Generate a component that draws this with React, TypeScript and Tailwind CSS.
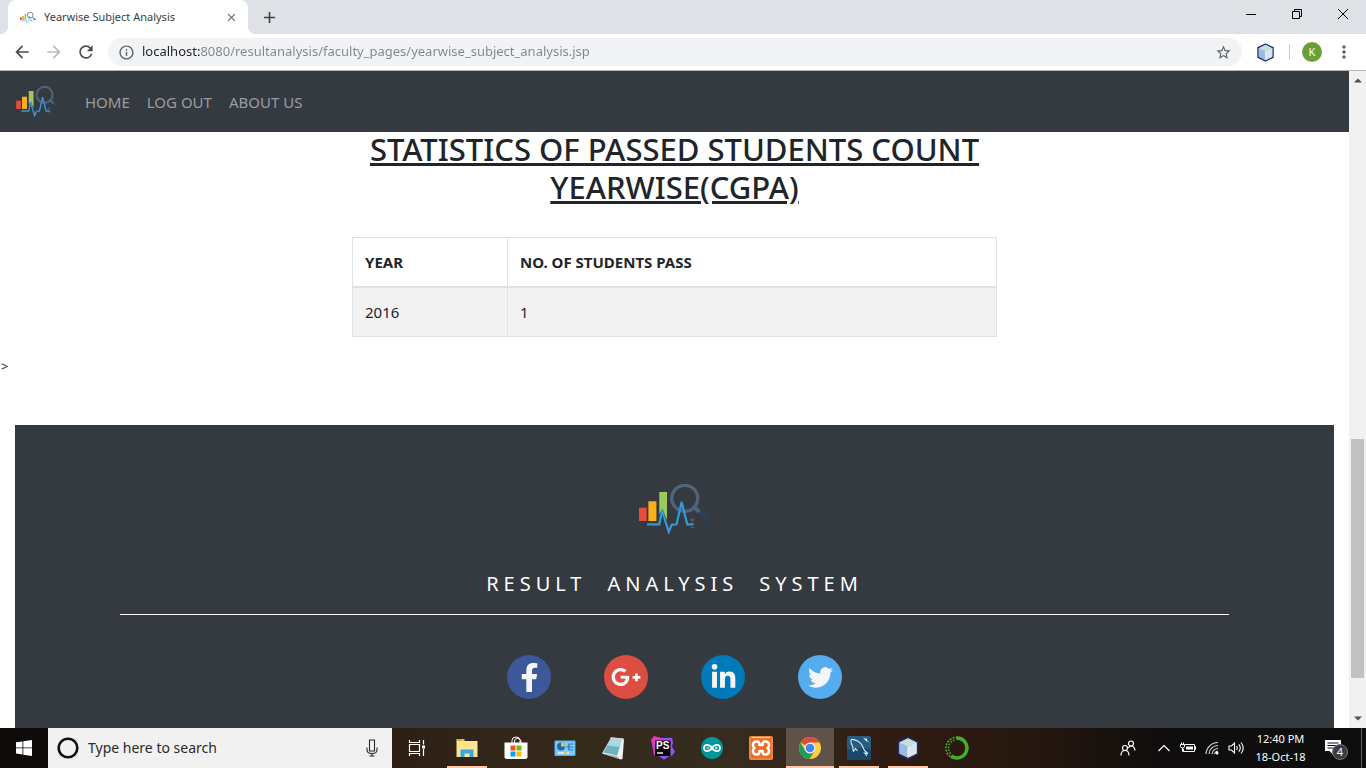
import React from "react";
import type { ReactNode } from "react";
import { FaFacebookF, FaGooglePlusG, FaLinkedinIn, FaTwitter } from "react-icons/fa";
import { MdArrowBack, MdArrowForward, MdRefresh, MdStarBorder, MdMoreVert, MdInfoOutline, MdClose, MdAdd } from "react-icons/md";

function Logo({ className }: { className: string }) {
  return (
    <svg viewBox="0 0 72 50" className={className} fill="none" aria-hidden="true">
      <rect x="0" y="23.7" width="7.6" height="13.3" fill="#e84c3d" />
      <rect x="9.4" y="17.3" width="8" height="19.7" fill="#fdb01a" />
      <path d="M20.300 8H28v28L23.500 25l-3.200 5z" fill="#9bc95c" />
      <circle cx="45.8" cy="14.3" r="13" stroke="#50647a" strokeWidth="3.400" />
      <path d="M55.500 23.500l5 4.500" stroke="#50647a" strokeWidth="3.800" />
      <path d="M60.500 28l9 8" stroke="#2b4058" strokeWidth="5" />
      <path d="M8 40.300h12.300l2.800-14 6.600 21.700 3-7.200 4.900-.5L42.600 18l5.700 22.300h6.200" stroke="#3498db" strokeWidth="2.200" />
      <path d="M51 36h4.600M53.200 34v4M52 43.500h3" stroke="#50647a" strokeWidth="1.200" />
    </svg>
  );
}

function Cube({ className }: { className: string }) {
  return (
    <svg viewBox="0 0 24 24" className={className} strokeLinejoin="round" aria-hidden="true">
      <path d="M12 1.500l9.500 4.500v12L12 22.500 2.500 18V6z" fill="#9fbde2" stroke="#1d2c63" strokeWidth="1.800" />
      <path d="M3.300 6.500L12 10.500v11.300l-8.700-4.300z" fill="#9ab9e6" />
      <path d="M20.700 6.500L12 10.500v11.300l8.700-4.300z" fill="#dbe5ee" />
      <path d="M12 2.300L3.300 6.500l8.700 4.300 8.700-4.300z" fill="#c7dfda" />
      <path d="M12 11v10" stroke="#f3f8fc" strokeWidth="1" />
    </svg>
  );
}

function BrowserChrome() {
  return (
    <header className="shrink-0">
      <div className="flex h-[34px] items-stretch bg-[#dee1e6] pl-2">
        <div className="relative flex w-60 items-center rounded-t-lg bg-white pr-2.5 pl-3">
          <span className="absolute bottom-0 -left-2 size-2 bg-[radial-gradient(circle_at_0_0,#dee1e6_8px,#ffffff_8px)]" />
          <span className="absolute -right-2 bottom-0 size-2 bg-[radial-gradient(circle_at_100%_0,#dee1e6_8px,#ffffff_8px)]" />
          <Logo className="h-[11px] w-4" />
          <span className="ml-2 flex-1 text-[11px] whitespace-nowrap text-[#3c4043]">Yearwise Subject Analysis</span>
          <button aria-label="Close tab" className="text-[#5f6368]"><MdClose size={13} /></button>
        </div>
        <button aria-label="New tab" className="ml-3 text-[#3c4043]"><MdAdd size={19} /></button>
        <div className="ml-auto flex text-black">
          <button aria-label="Minimize" className="flex w-[46px] items-center justify-center pb-1.5">
            <svg viewBox="0 0 10 10" className="size-2.5" stroke="currentColor"><path d="M0 5.500h10" /></svg>
          </button>
          <button aria-label="Restore" className="flex w-[46px] items-center justify-center pb-1.5">
            <svg viewBox="0 0 10 10" className="size-2.5" stroke="currentColor" fill="none"><path d="M.5 2.500h7v7h-7zM2.500 2.500v-2h7v7h-2" /></svg>
          </button>
          <button aria-label="Close" className="flex w-[46px] items-center justify-center pb-1.5">
            <svg viewBox="0 0 10 10" className="size-2.5" stroke="currentColor"><path d="M0 0l10 10M10 0L0 10" /></svg>
          </button>
        </div>
      </div>
      <div className="flex h-[37px] items-center border-b border-[#b6b4b6] bg-white px-3 text-[#5f6368]">
        <div className="flex gap-3">
          <button aria-label="Back" className="text-[#4a4d51]"><MdArrowBack size={20} /></button>
          <button aria-label="Forward" className="text-[#b9bbbd]"><MdArrowForward size={20} /></button>
          <button aria-label="Reload" className="text-[#4a4d51]"><MdRefresh size={20} /></button>
        </div>
        <div className="ml-3 flex h-7 flex-1 items-center rounded-full bg-[#f1f3f4] px-2.5">
          <MdInfoOutline size={17} />
          <input
            aria-label="Address"
            className="ml-[7px] min-w-0 flex-1 bg-[linear-gradient(90deg,#202124_59px,#80868b_59px)] bg-clip-text text-[13px] text-transparent outline-none"
            defaultValue="localhost:8080/resultanalysis/faculty_pages/yearwise_subject_analysis.jsp"
          />
          <button aria-label="Bookmark"><MdStarBorder size={17} /></button>
        </div>
        <button aria-label="NetBeans connector" className="ml-3.5"><Cube className="size-[19px]" /></button>
        <span className="ml-3.5 h-4 w-px bg-[#c9cbce]" />
        <button aria-label="Profile" className="ml-3 size-5 rounded-full bg-[#689f38] text-[11px] text-white">K</button>
        <button aria-label="Menu" className="ml-3"><MdMoreVert size={20} /></button>
      </div>
    </header>
  );
}

const socials = [
  { name: "Facebook", color: "bg-[#3b5998]", icon: <FaFacebookF size={29} /> },
  { name: "Google Plus", color: "bg-[#dc4e41]", icon: <FaGooglePlusG size={30} /> },
  { name: "LinkedIn", color: "bg-[#007ab9]", icon: <FaLinkedinIn size={27} /> },
  { name: "Twitter", color: "bg-[#55acee]", icon: <FaTwitter size={25} /> },
];

function SitePage() {
  return (
    <div className="flex min-w-0 flex-1 flex-col overflow-hidden bg-white text-[15px] leading-6 text-[#212529]">
      <nav className="z-10 flex h-[61px] shrink-0 items-center bg-[#343a40] pl-4 text-[#9a9da0]">
        <a href="#" aria-label="Result Analysis System"><Logo className="h-[31px] w-[45px]" /></a>
        <div className="ml-6 flex gap-[17px]">
          <a href="#home">HOME</a>
          <a href="#logout">LOG OUT</a>
          <a href="#about">ABOUT US</a>
        </div>
      </nav>
      <main className="mx-auto -mt-0.5 w-[645px] max-w-full">
        <h2 className="text-center text-[31px] leading-[38px] font-medium underline">
          STATISTICS OF PASSED STUDENTS COUNT YEARWISE(CGPA)
        </h2>
        <table className="mt-[31px] w-full border-collapse text-left">
          <thead>
            <tr>
              <th className="w-[155px] border border-b-2 border-[#dee2e6] p-3 font-bold">YEAR</th>
              <th className="border border-b-2 border-[#dee2e6] p-3 font-bold">NO. OF STUDENTS PASS</th>
            </tr>
          </thead>
          <tbody>
            <tr className="bg-[#f2f2f2]">
              <td className="border border-[#dee2e6] p-3">2016</td>
              <td className="border border-[#dee2e6] p-3">1</td>
            </tr>
          </tbody>
        </table>
      </main>
      <p className="mt-[17px] pl-px text-[13px] leading-6">&gt;</p>
      <footer className="mx-[15px] mt-[47px] flex flex-1 flex-col items-center bg-[#343a40] px-[105px] pt-[59px] text-white">
        <Logo className="h-[50px] w-[72px]" />
        <p className="mt-9 flex gap-[21px] text-xl leading-7 tracking-[5px]">
          <span>RESULT</span> <span>ANALYSIS</span> <span>SYSTEM</span>
        </p>
        <hr className="mt-4 w-full border-white" />
        <div className="mt-10 flex gap-[53px]">
          {socials.map((s) => (
            <a key={s.name} href={"#" + s.name} aria-label={s.name} className={"flex size-11 items-center justify-center rounded-full text-[#f5f5f5] " + s.color}>
              {s.icon}
            </a>
          ))}
        </div>
      </footer>
    </div>
  );
}

function Scrollbar() {
  return (
    <div className="flex w-[17px] shrink-0 flex-col items-center justify-between bg-[#f1f1f1] py-[7px]" aria-hidden="true">
      <svg viewBox="0 0 8 5" className="h-[5px] w-2"><path d="M0 4.500L4 .5l4 4z" fill="#505050" /></svg>
      <div className="mt-auto mb-[38px] h-[239px] w-[13px] bg-[#c1c1c1]" />
      <svg viewBox="0 0 8 5" className="h-[5px] w-2"><path d="M0 .5l4 4 4-4z" fill="#505050" /></svg>
    </div>
  );
}

const apps: { name: string; mark: string; icon: ReactNode }[] = [
  {
    name: "Task View", mark: "none",
    icon: (
      <svg viewBox="0 0 24 24" className="mr-0.5 size-6" fill="none" stroke="#fff" strokeWidth="1.200">
        <path d="M4.500 8.500h10v7h-10zM4.500 4v2.500h10V4M4.500 20v-2.500h10V20M18.500 4v4.500M18.500 13v7" />
        <path d="M17 9.500h3v3h-3z" fill="#fff" stroke="none" />
      </svg>
    ),
  },
  {
    name: "File Explorer", mark: "run",
    icon: (
      <svg viewBox="0 0 24 24" className="size-6">
        <path d="M1.500 3h8v3h-8z" fill="#f4b92c" /><path d="M1.500 5h21v16h-21z" fill="#ffe591" />
        <path d="M3 3.500h3v1H3z" fill="#4fae5c" />
        <path d="M5.500 21v-7.500h13V21h-4v-3.500h-5V21z" fill="#37a9e0" />
      </svg>
    ),
  },
  {
    name: "Store", mark: "none",
    icon: (
      <svg viewBox="0 0 24 24" className="size-6">
        <path d="M8 7V4.500Q8 1 12 1t4 3.500V7M10.500 7V5q0-2.500 3-2.500T17 5v2" fill="none" stroke="#fff" strokeWidth="1" />
        <path d="M.5 6.500h23v15l-1.500 1.500h-20L.5 21.500z" fill="#fff" />
        <path d="M6.500 9.500h5v5h-5z" fill="#f25022" /><path d="M12.500 9.500h5v5h-5z" fill="#7fba00" />
        <path d="M6.500 15.500h5v5h-5z" fill="#00a4ef" /><path d="M12.500 15.500h5v5h-5z" fill="#ffb900" />
      </svg>
    ),
  },
  {
    name: "Control Panel", mark: "none",
    icon: (
      <svg viewBox="0 0 24 24" className="size-6">
        <rect x="1.500" y="4.500" width="21" height="15.500" rx="1" fill="#4cb5ef" />
        <rect x="2.500" y="5.500" width="19" height="13.500" fill="#7dccf8" />
        <circle cx="8" cy="10.500" r="4" fill="#1769b3" /><path d="M8 10.500v-4a4 4 0 0 1 4 4z" fill="#f5bd3e" />
        <path d="M13.500 11h2M16 7.500v7M17.500 8h2.500M17.500 11h2.500M17.500 14h2.500" stroke="#1769b3" strokeWidth="1.200" />
        <path d="M5 17h11" stroke="#fff" strokeWidth="1.200" /><path d="M11 16h3v2h-3z" fill="#f5bd3e" />
      </svg>
    ),
  },
  {
    name: "Notepad", mark: "none",
    icon: (
      <svg viewBox="0 0 24 24" className="size-6">
        <path d="M0 17.500L9 1.500l12 1L18.500 23z" fill="#e3e8e8" />
        <path d="M1.500 16.500L9 2.500l11 1-4.500 16z" fill="#6fb3c2" />
        <path d="M9 2.500l11 1-2 7.500L5.500 9.500z" fill="#a9dae3" />
        <path d="M15 20L20.500 2.500l1.500 1L20.500 23l-2.500.5z" fill="#f1f1ec" /><path d="M0 17.500l15 2.500 2 3z" fill="#b5b3a8" />
        <path d="M8.500 2l13 1.200" stroke="#cfd4d4" strokeWidth="1.500" />
      </svg>
    ),
  },
  {
    name: "PhpStorm", mark: "none",
    icon: (
      <svg viewBox="0 0 24 24" className="size-6">
        <path d="M.2 4L3 .3 11 2l10-.3 1 5-1 4 3 5-3 4-3 .5-5 3.500-5-3.500-5-1z" fill="#9353f5" />
        <path d="M.2 4L3 .3 12 3l-6 9-3 6-.5-7z" fill="#ee35b4" />
        <path d="M4 4.500h15.500V20H4z" fill="#0b080b" />
        <text x="5" y="12.800" fill="#fff" fontSize="10" fontWeight="700" fontFamily="Liberation Sans, sans-serif">PS</text>
        <path d="M6 17h6" stroke="#fff" strokeWidth="1.400" />
      </svg>
    ),
  },
  {
    name: "Arduino", mark: "none",
    icon: (
      <svg viewBox="0 0 24 24" className="size-6" fill="none" stroke="#fff" strokeWidth="1.700">
        <circle cx="12" cy="12" r="11" fill="#00979c" stroke="none" />
        <path d="M12 12C9.500 8 4 7.800 4 12s5.500 4 8 0 8-4.200 8 0-5.500 4-8 0z" />
        <path d="M6.500 12h2.500M15 12h2.500M16.200 10.800v2.400" strokeWidth="1" />
      </svg>
    ),
  },
  {
    name: "XAMPP", mark: "none",
    icon: (
      <svg viewBox="0 0 24 24" className="size-6">
        <rect x="0" y="0" width="24" height="24" rx="2" fill="#ec6f24" />
        <path d="M1 1h22v22H1z" fill="none" stroke="#f5995c" strokeWidth="1" />
        <path d="M3 1.500h18" stroke="#fbc9a4" strokeWidth="1.200" />
        <path d="M8 5.500q-4 0-4 3.500 0 2 1.500 3-1.500 1-1.500 3 0 3.500 4 3.500 2.500 0 2.500-3.500h3q0 3.500 2.500 3.500 4 0 4-3.500 0-2-1.500-3 1.500-1 1.500-3 0-3.500-4-3.500-2.500 0-2.500 3.500h-3q0-3.500-2.500-3.500z" fill="none" stroke="#fff" strokeWidth="2.600" strokeLinejoin="round" />
      </svg>
    ),
  },
  {
    name: "Chrome", mark: "active",
    icon: (
      <svg viewBox="0 0 24 24" className="size-6">
        <circle cx="12" cy="12" r="11" fill="#ffcd40" />
        <path d="M12 12L2.470 6.500A11 11 0 0 1 21.530 6.500H12z" fill="#dd4b3e" />
        <path d="M2.470 6.500L7.200 14.700 12 17l4-1-4.500 7A11 11 0 0 1 2.470 6.500z" fill="#1a9e5a" />
        <circle cx="12" cy="12" r="5.500" fill="#f1f1f1" /><circle cx="12" cy="12" r="4.300" fill="#4285f4" />
      </svg>
    ),
  },
  {
    name: "MySQL Workbench", mark: "run",
    icon: (
      <svg viewBox="0 0 24 24" className="size-6">
        <rect width="24" height="24" rx="2" fill="#255d82" /><path d="M0 14q12-4 24 0v8q0 2-2 2H2q-2 0-2-2z" fill="#19486a" />
        <path d="M6.500 15.500c-1-1.500 0-3.500-1-5.500C4 7 3 4.500 4.500 3.500c2-.5 4 .5 6 1.500 4 2 5.500 5.500 6.500 8.500 1 2 3 2.500 3.500 4l-3-.5 2.500 3M6.500 15.500l2-3 2 2.500" fill="none" stroke="#dfeaf0" strokeWidth="1.100" />
        <path d="M16 1.500l3 1.500 1-1v2.500l2.500 2L19 5z" fill="#fff" />
      </svg>
    ),
  },
  { name: "NetBeans", mark: "run", icon: <Cube className="size-6" /> },
  {
    name: "Anaconda", mark: "none",
    icon: (
      <svg viewBox="0 0 24 24" className="size-6" fill="none" stroke="#43b02a">
        <path d="M11 2A10 10 0 1 1 6 20" strokeWidth="3.500" />
        <path d="M9.500 1.500A10.800 10.800 0 0 0 5 20.500" strokeWidth="1.600" strokeDasharray="2 1.200" />
        <path d="M9.500 4A8.500 8.500 0 0 0 6.500 18.500" strokeWidth="1.500" strokeDasharray="1.500 1.500" />
      </svg>
    ),
  },
];

function Taskbar() {
  return (
    <footer className="flex h-10 shrink-0 bg-[linear-gradient(90deg,#0e0b09_0%,#0e0b09_4%,#2e1f15_29%,#342a1c_42%,#352b1e_54%,#2e1b12_66%,#25170f_76%,#100d0d_85%,#0e0d0d_100%)] text-white">
      <button aria-label="Start" className="flex w-12 items-center justify-center">
        <svg viewBox="0 0 16 16" className="size-4" fill="#fff"><path d="M0 2.300L6.500 1.400v6.100H0zM7.300 1.300L16 0v7.500H7.300zM0 8.300h6.500v6.200L0 13.600zM7.300 8.300H16V16l-8.700-1.300z" /></svg>
      </button>
      <div className="flex w-[344px] items-center bg-[#f1f1f1] pr-3 pl-2 text-[#2b2b2b]">
        <svg viewBox="0 0 24 24" className="size-6" fill="none"><circle cx="12" cy="12" r="9.300" stroke="#111" strokeWidth="2.600" /></svg>
        <input aria-label="Search" placeholder="Type here to search" className="ml-2 min-w-0 flex-1 text-sm outline-none placeholder:text-[#2b2b2b]" />
        <svg viewBox="0 0 16 18" className="h-[18px] w-4" fill="none" stroke="currentColor" strokeWidth="1.100">
          <path d="M5.500 1h5v11h-5zM3 8.500V11q0 3.500 5 3.500t5-3.500V8.500M8 14.500V17M5.500 17h5" />
        </svg>
      </div>
      <div className="flex gap-px pl-0.5">
        {apps.map((a) => (
          <button key={a.name} aria-label={a.name} className={"flex w-12 flex-col items-center " + (a.mark === "active" ? "bg-[#5f5249]" : "")}>
            <span className="flex flex-1 items-center">{a.icon}</span>
            {a.mark !== "none" && <span className={"-mt-0.5 h-0.5 bg-[#ffc8a5] " + (a.mark === "active" ? "w-full" : "w-10")} />}
          </button>
        ))}
      </div>
      <div className="ml-auto flex items-center">
        <button aria-label="People" className="mr-2">
          <svg viewBox="0 0 16 16" className="mx-2 size-4" fill="none" stroke="#fff" strokeWidth="1.200">
            <circle cx="5" cy="8" r="2.500" /><circle cx="11" cy="3.500" r="2.500" /><path d="M1 15.500q0-5 4-5t4 5M8.500 8q.5-2 2.500-2 3.500 0 4 4.500" />
          </svg>
        </button>
        <button aria-label="Show hidden icons" className="flex w-6 justify-center">
          <svg viewBox="0 0 12 8" className="h-2 w-3" fill="none" stroke="#fff" strokeWidth="1.200"><path d="M.5 7L6 1.500 11.500 7" /></svg>
        </button>
        <button aria-label="Battery" className="flex w-6 justify-center">
          <svg viewBox="0 0 16 12" className="h-3 w-4" fill="none" stroke="#fff">
            <path d="M5 2.500h9.500v7h-11V7M14.500 4.500h1v3h-1M.5 2.500h4v2q0 1.500-2 1.500t-2-1.500zM1.500 2.500V.5M3.500 2.500V.5M2.500 6v3.500h1" /><path d="M6 4.500h7v3H6z" fill="#fff" stroke="none" />
          </svg>
        </button>
        <button aria-label="Network" className="flex w-6 justify-center">
          <svg viewBox="0 0 14 14" className="size-3.5" fill="none" stroke="#ddd" strokeWidth="1.100">
            <path d="M1 13A12 12 0 0 1 13 1.500M4 13a9 9 0 0 1 9-8.500M7 13a6 6 0 0 1 6-5.500M9.500 13q.5-2.500 3.500-3" /><circle cx="12" cy="12" r="1.500" fill="#fff" stroke="none" />
          </svg>
        </button>
        <button aria-label="Volume" className="flex w-6 justify-center">
          <svg viewBox="0 0 17 14" className="h-3.5 w-[17px]" fill="none" stroke="#fff" strokeWidth="1.100">
            <path d="M1 5h2.500L6.500 2v10l-3-3H1zM8.500 5q1.500 2 0 4M10.800 3.300q3 3.700 0 7.400M13 1.500q4.500 5.500 0 11" />
          </svg>
        </button>
        <button className="w-[65px] text-center text-[11px] leading-[18px] whitespace-nowrap">12:40 PM<br />18-Oct-18</button>
        <button aria-label="Notifications" className="relative flex w-12 justify-center">
          <svg viewBox="0 0 16 16" className="mr-2 size-4"><path d="M0 0h16v11h-8v3.500L4.500 11H0z" fill="#fff" /><path d="M2.500 3h11M2.500 5.500h11M2.500 8h8" stroke="#111" /></svg>
          <span className="absolute top-1 left-[19px] flex size-4 items-center justify-center rounded-full border border-[#777] bg-[#3b3b3b] text-[11px]">4</span>
        </button>
        <button aria-label="Show desktop" className="h-10 w-[5px] border-l border-[#5c5a59]" />
      </div>
    </footer>
  );
}

export default function App() {
  return (
    <div className="flex h-screen flex-col overflow-hidden font-['Noto_Sans','Open_Sans',sans-serif]">
      <BrowserChrome />
      <div className="flex min-h-0 flex-1">
        <SitePage />
        <Scrollbar />
      </div>
      <Taskbar />
    </div>
  );
}
